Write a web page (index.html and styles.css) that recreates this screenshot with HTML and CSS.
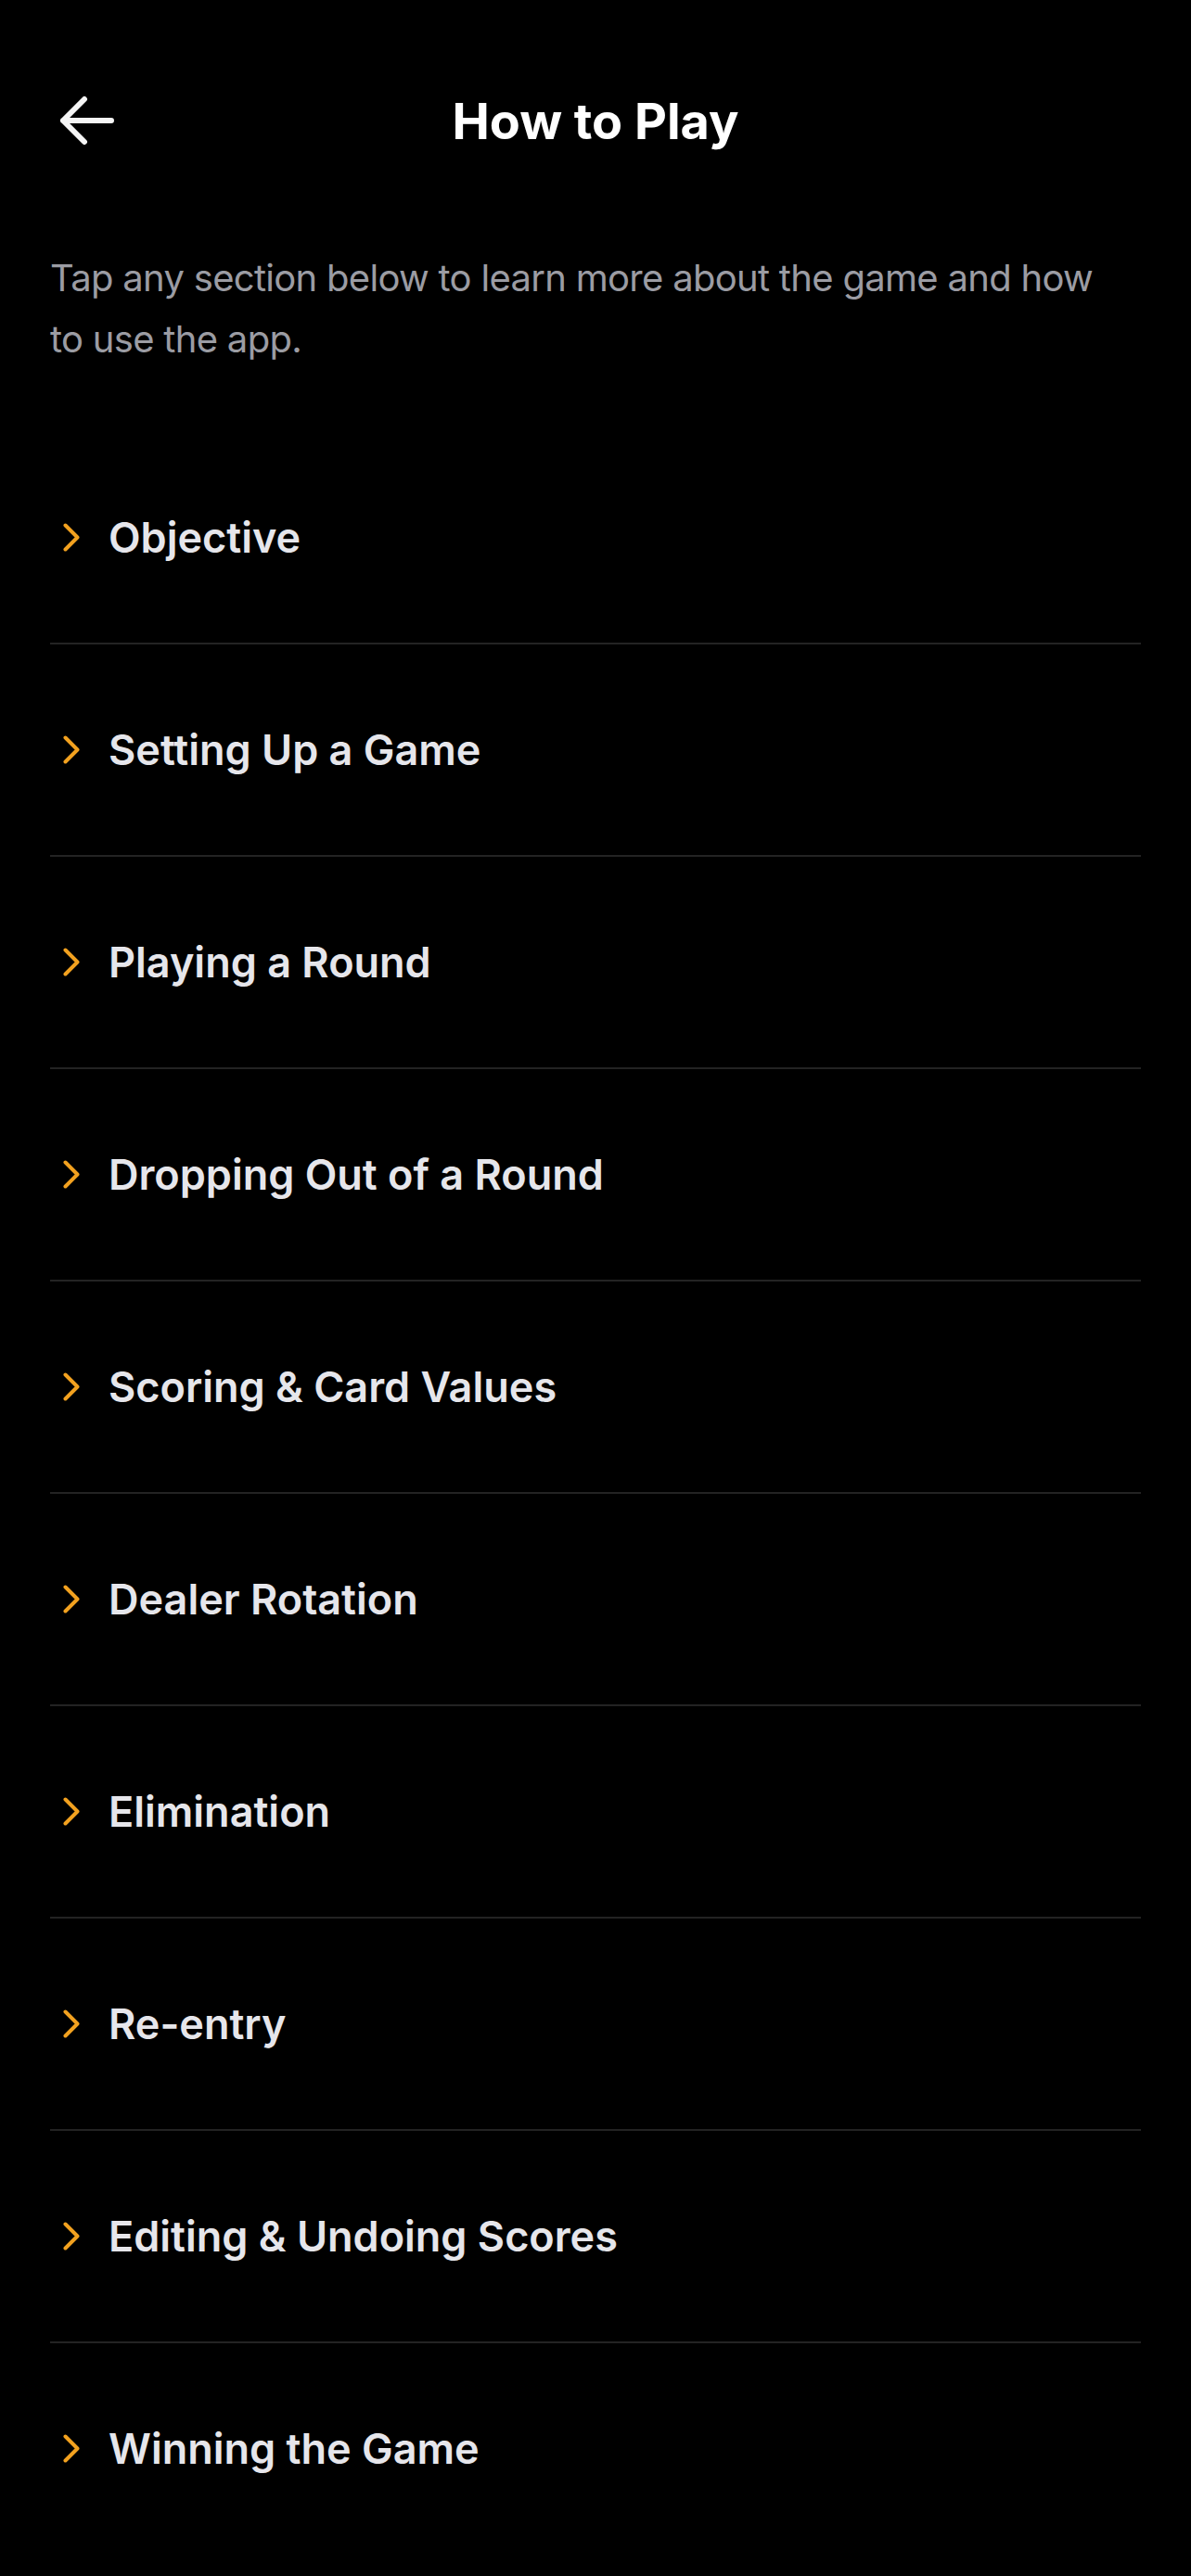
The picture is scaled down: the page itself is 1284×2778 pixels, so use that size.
FILE: index.html
```html
<!DOCTYPE html>
<html lang="en">

<head>
  <meta charset="UTF-8">
  <meta name="viewport" content="width=device-width, initial-scale=1.0">
  <title>How to Play</title>
  <link rel="stylesheet" href="styles.css">
</head>

<body>
  <div id="app">
    <div class="header">
      <div class="back">
        <svg width="60" height="54" viewBox="0 0 60 54">
          <path d="M4 27 H56 M4 27 L27 4 M4 27 L27 50" fill="none" stroke="#f5f5f5" stroke-width="6" stroke-linecap="round" stroke-linejoin="round" />
        </svg>
      </div>
      <div class="title">How to Play</div>
      <div class="spacer"></div>
    </div>

    <div class="intro">Tap any section below to learn more about the game and how to use the app.</div>

    <div class="list">
      <div class="item">
        <svg class="chev" width="18" height="31" viewBox="0 0 18 31"><path d="M2.5 2.5 L15.5 15.5 L2.5 28.5" /></svg>
        <span class="label">Objective</span>
      </div>
      <div class="item">
        <svg class="chev" width="18" height="31" viewBox="0 0 18 31"><path d="M2.5 2.5 L15.5 15.5 L2.5 28.5" /></svg>
        <span class="label">Setting Up a Game</span>
      </div>
      <div class="item">
        <svg class="chev" width="18" height="31" viewBox="0 0 18 31"><path d="M2.5 2.5 L15.5 15.5 L2.5 28.5" /></svg>
        <span class="label">Playing a Round</span>
      </div>
      <div class="item">
        <svg class="chev" width="18" height="31" viewBox="0 0 18 31"><path d="M2.5 2.5 L15.5 15.5 L2.5 28.5" /></svg>
        <span class="label">Dropping Out of a Round</span>
      </div>
      <div class="item">
        <svg class="chev" width="18" height="31" viewBox="0 0 18 31"><path d="M2.5 2.5 L15.5 15.5 L2.5 28.5" /></svg>
        <span class="label">Scoring &amp; Card Values</span>
      </div>
      <div class="item">
        <svg class="chev" width="18" height="31" viewBox="0 0 18 31"><path d="M2.5 2.5 L15.5 15.5 L2.5 28.5" /></svg>
        <span class="label">Dealer Rotation</span>
      </div>
      <div class="item">
        <svg class="chev" width="18" height="31" viewBox="0 0 18 31"><path d="M2.5 2.5 L15.5 15.5 L2.5 28.5" /></svg>
        <span class="label">Elimination</span>
      </div>
      <div class="item">
        <svg class="chev" width="18" height="31" viewBox="0 0 18 31"><path d="M2.5 2.5 L15.5 15.5 L2.5 28.5" /></svg>
        <span class="label">Re-entry</span>
      </div>
      <div class="item">
        <svg class="chev" width="18" height="31" viewBox="0 0 18 31"><path d="M2.5 2.5 L15.5 15.5 L2.5 28.5" /></svg>
        <span class="label">Editing &amp; Undoing Scores</span>
      </div>
      <div class="item">
        <svg class="chev" width="18" height="31" viewBox="0 0 18 31"><path d="M2.5 2.5 L15.5 15.5 L2.5 28.5" /></svg>
        <span class="label">Winning the Game</span>
      </div>
    </div>
  </div>
</body>

</html>
```

FILE: styles.css
```css
body,
html {
  margin: 0;
  padding: 0;
  background-color: #000;
  font-family: Inter, "Noto Sans", sans-serif;
}

#app {
  width: 1284px;
  min-height: 2778px;
  background-color: #000;
}

.header {
  display: grid;
  grid-template-columns: 120px 1fr 120px;
  align-items: center;
  height: 120px;
  margin-top: 70px;
  padding: 0 54px;
}

.back {
  display: flex;
  align-items: center;
  padding-left: 10px;
}

.title {
  text-align: center;
  color: #fff;
  font-size: 54px;
  font-weight: 700;
}

.intro {
  margin: 77px 72px 0 54px;
  color: #9b9ca3;
  font-size: 40px;
  line-height: 66px;
  letter-spacing: -0.7px;
}

.list {
  margin: 67px 54px 0 54px;
}

.item {
  display: flex;
  align-items: center;
  height: 227px;
  border-bottom: 2px solid #232323;
}

.item:last-child {
  border-bottom: none;
}

.chev {
  margin-left: 14px;
  flex-shrink: 0;
}

.chev path {
  fill: none;
  stroke: #f2a11f;
  stroke-width: 4;
  stroke-linecap: round;
  stroke-linejoin: round;
}

.label {
  margin-left: 31px;
  color: #e6e6eb;
  font-size: 45px;
  font-weight: 600;
}
```
